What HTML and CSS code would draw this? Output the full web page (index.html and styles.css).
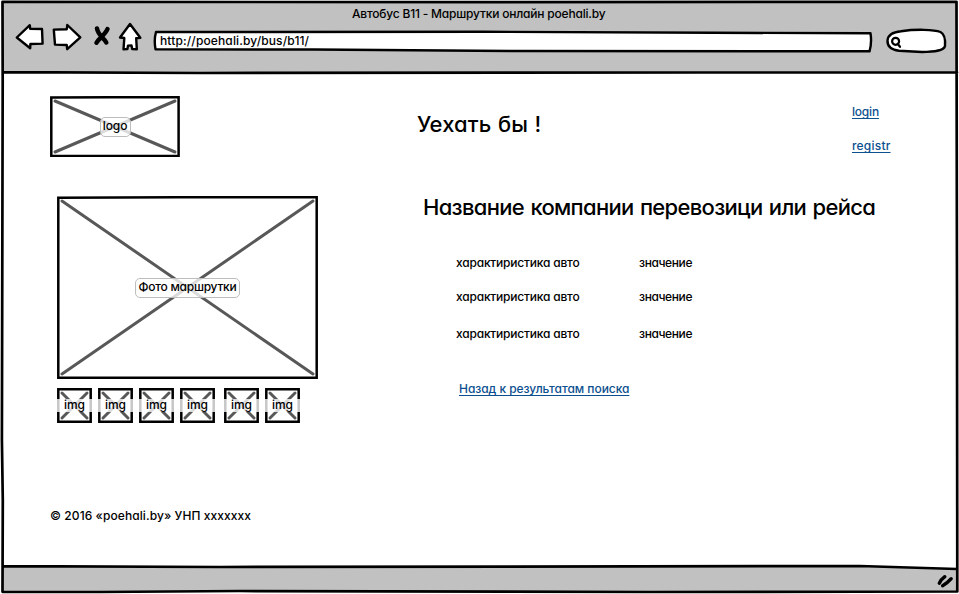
FILE: index.html
```html
<!DOCTYPE html>
<html lang="ru">
<head>
<meta charset="utf-8">
<title>Автобус B11 - Маршрутки онлайн poehali.by</title>
<link rel="stylesheet" href="styles.css">
</head>
<body>
<div class="browser">
  <svg class="frame" viewBox="0 0 959 594" aria-hidden="true">
    <path class="bar" d="M2 2H956V73L2 72Z M3 567L860 566L957 569V591L3 592Z"/>
    <path class="ink" d="M2.5 1.8L500 2.2L956.5 1.8L957 300L957.3 591.5L650 592L240 591L100 592L2.5 591.8L2.8 500L1.9 440L2.7 80Z M3 72.2L200 73L700 72.5L957 72.4 M3 566.2L220 567L860 566L957 569"/>
    <path class="grip" d="M939.3 583.2Q941 579.5 944.8 576.7M942.6 585.8Q947 583.5 951.2 578.7"/>
  </svg>
  <header class="chrome">
    <div class="title">Автобус B11 - Маршрутки онлайн poehali.by</div>
    <div class="toolbar">
      <svg class="nav" viewBox="14 20 130 34">
        <path class="icon" d="M16.8 37.5L29.8 25.2L30.2 28.8L42 29L42.6 43.6L30.4 44L30.2 48.2Z"/>
        <path class="icon" d="M53.8 29.6L66.8 29.2L67.3 25L80.3 37.3L67.2 49.2L66.7 45L55 44.6Z"/>
        <path class="cross" d="M97 28.5C98 35 104 38 106.3 42.5M107.5 29C105 35 99 38 96.5 42.7"/>
        <path class="icon" d="M130 24L120 37.5L124.3 38L123.5 49.4L127.4 49L128 45.6L131.5 45.4L132.2 49L136.8 49.3L136.2 38.2L140.3 37.8Z"/>
      </svg>
      <div class="address">
        <svg class="outline" viewBox="0 0 720 24"><path d="M3 3L330 2.8L560 3.8L717.5 4.2Q719 14 716.5 22.3L360 22L160 20.5L2.5 20.3Q.8 11 3 3Z"/></svg>
        <span>http://poehali.by/bus/b11/</span>
      </div>
      <svg class="search" viewBox="885 26 63 29">
        <path class="icon" d="M901 31.3C916 29 934 29.5 940.5 32C945 34.5 945.5 40 945 46C944 51 934 51.8 922 52L899 50.8C890 49.5 887.3 45 887.5 40.5C888 35 894 32 901 31.3Z"/>
        <circle class="lens" cx="895.6" cy="41.3" r="3.5"/><path class="lens" d="M897.8 44L900 46.8"/>
      </svg>
    </div>
  </header>
  <main class="page">
    <section class="left">
      <div class="pic logo">
        <svg viewBox="0 0 130 61"><path class="diag" d="M5 5L125 56M125 5L5 56"/><path class="box" d="M1.3 1.5L60 1.3H128.6V59.7L1.3 60Z"/></svg>
        <span class="label">logo</span>
      </div>
      <div class="pic photo">
        <svg viewBox="0 0 261 183"><path class="diag" d="M5 5L256 178M256 5L5 178"/><path class="box" d="M1.3 1.7L120 1.3H259.7V181.7L1.3 181.7Z"/></svg>
        <span class="label">Фото маршрутки</span>
      </div>
      <div class="thumbs">
        <div class="pic thumb"><svg viewBox="0 0 35 35"><path class="diag" d="M5 5L30 30M30 5L5 30"/><path class="box" d="M1.3 1.3H33.7V33.7H1.3Z"/></svg><span class="label">img</span></div>
        <div class="pic thumb"><svg viewBox="0 0 35 35"><path class="diag" d="M5 5L30 30M30 5L5 30"/><path class="box" d="M1.3 1.3H33.7V33.7H1.3Z"/></svg><span class="label">img</span></div>
        <div class="pic thumb"><svg viewBox="0 0 35 35"><path class="diag" d="M5 5L30 30M30 5L5 30"/><path class="box" d="M1.3 1.3H33.7V33.7H1.3Z"/></svg><span class="label">img</span></div>
        <div class="pic thumb wide-gap"><svg viewBox="0 0 35 35"><path class="diag" d="M5 5L30 30M30 5L5 30"/><path class="box" d="M1.3 1.3H33.7V33.7H1.3Z"/></svg><span class="label">img</span></div>
        <div class="pic thumb"><svg viewBox="0 0 35 35"><path class="diag" d="M5 5L30 30M30 5L5 30"/><path class="box" d="M1.3 1.3H33.7V33.7H1.3Z"/></svg><span class="label">img</span></div>
        <div class="pic thumb"><svg viewBox="0 0 35 35"><path class="diag" d="M5 5L30 30M30 5L5 30"/><path class="box" d="M1.3 1.3H33.7V33.7H1.3Z"/></svg><span class="label">img</span></div>
      </div>
      <footer class="copy">© 2016 «poehali.by» УНП xxxxxxx</footer>
    </section>
    <section class="right">
      <div class="top">
        <h1 class="slogan">Уехать бы !</h1>
        <nav class="auth"><a class="login">login</a><a class="register">registr</a></nav>
      </div>
      <h2 class="company">Название компании перевозици или рейса</h2>
      <dl class="specs">
        <dt>характиристика авто</dt><dd>значение</dd>
        <dt>характиристика авто</dt><dd>значение</dd>
        <dt>характиристика авто</dt><dd>значение</dd>
      </dl>
      <a class="back">Назад к результатам поиска</a>
    </section>
  </main>
</div>
</body>
</html>
```
FILE: styles.css
```css
* { box-sizing: border-box; margin: 0; padding: 0; }
body { background: #fff; color: #000; overflow: hidden; font: 500 12px/20px Inter, "Open Sans", sans-serif; font-feature-settings: "cv11" 1; }
svg { display: block; fill: none; stroke-linejoin: round; stroke-linecap: round; }
.browser { position: relative; width: 959px; height: 594px; display: flex; flex-direction: column; }
.frame { position: absolute; inset: 0; width: 959px; height: 594px; }
.bar { fill: #c1c1c1; }
.ink { stroke: #000; stroke-width: 2.7; }
.grip { stroke: #000; stroke-width: 3.4; }
.icon { fill: #fff; stroke: #000; stroke-width: 2.4; }
.cross { stroke: #000; stroke-width: 4.5; }
.lens { stroke: #000; stroke-width: 2.2; }
.chrome { position: relative; height: 73px; }
.title { height: 26px; padding-top: 4px; padding-left: 352px; white-space: nowrap; letter-spacing: -.2px; }
.toolbar { display: flex; align-items: flex-start; padding-left: 14px; margin-top: -6px; }
.nav { width: 130px; height: 34px; }
.address { position: relative; width: 720px; height: 24px; margin: 9px 13px 0 9px; padding: 2px 0 0 7px; letter-spacing: .13px; }
.outline { position: absolute; inset: 0; width: 720px; height: 24px; fill: #fff; stroke: #000; stroke-width: 2.4; }
.address span { position: relative; }
.search { width: 63px; height: 29px; margin-top: 6px; margin-left: -1px; }
.page { position: relative; flex: 1; display: grid; grid-template-columns: 417px 1fr; }
.left { padding: 23px 0 0 50px; }
.pic { display: grid; place-items: center; }
.pic > * { grid-area: 1 / 1; }
.diag { stroke: #585858; stroke-width: 3; }
.box { stroke: #000; stroke-width: 2.5; stroke-linejoin: miter; }
.label { background: rgba(255,255,255,.78); border: 1px solid #bdbdbd; border-radius: 5px; line-height: 15px; text-align: center; white-space: nowrap; z-index: 1; }
.logo { width: 130px; height: 61px; }
.logo .label { width: 31px; height: 20px; letter-spacing: -.1px; }
.photo { width: 261px; height: 183px; margin: 39px 0 9px 7px; }
.photo .label { width: 105px; height: 20px; letter-spacing: -.27px; }
.thumbs { display: flex; gap: 6px; margin-left: 7px; }
.thumb { width: 35px; height: 35px; }
.thumb .label { border: 0; border-radius: 0; width: 35px; height: 13px; line-height: 11px; }
.wide-gap { margin-right: 3px; }
.copy { margin-top: 83px; white-space: nowrap; letter-spacing: .08px; }
.top { display: flex; justify-content: space-between; height: 120px; padding: 28px 68px 0 0; }
h1, h2 { font-weight: 450; font-size: 22px; line-height: 28px; white-space: nowrap; }
.slogan { margin-top: 9px; letter-spacing: .15px; word-spacing: .4px; }
.auth { display: flex; flex-direction: column; gap: 14px; align-items: flex-start; width: 39px; padding-top: 1px; }
a { color: #0b4f8f; text-decoration: underline; text-underline-offset: 2px; text-decoration-thickness: 1px; text-decoration-skip-ink: none; white-space: nowrap; }
.login { letter-spacing: -.2px; }
.register { letter-spacing: .2px; }
.company { padding-left: 6px; letter-spacing: -.69px; word-spacing: 1.2px; }
.specs { display: grid; grid-template-columns: 183px 1fr; grid-template-rows: 34px 37px 20px; padding: 32px 0 0 39px; }
dt { letter-spacing: -.2px; }
dd { letter-spacing: -.4px; }
.back { display: block; margin: 35px 0 0 42px; width: max-content; letter-spacing: -.05px; }
```
